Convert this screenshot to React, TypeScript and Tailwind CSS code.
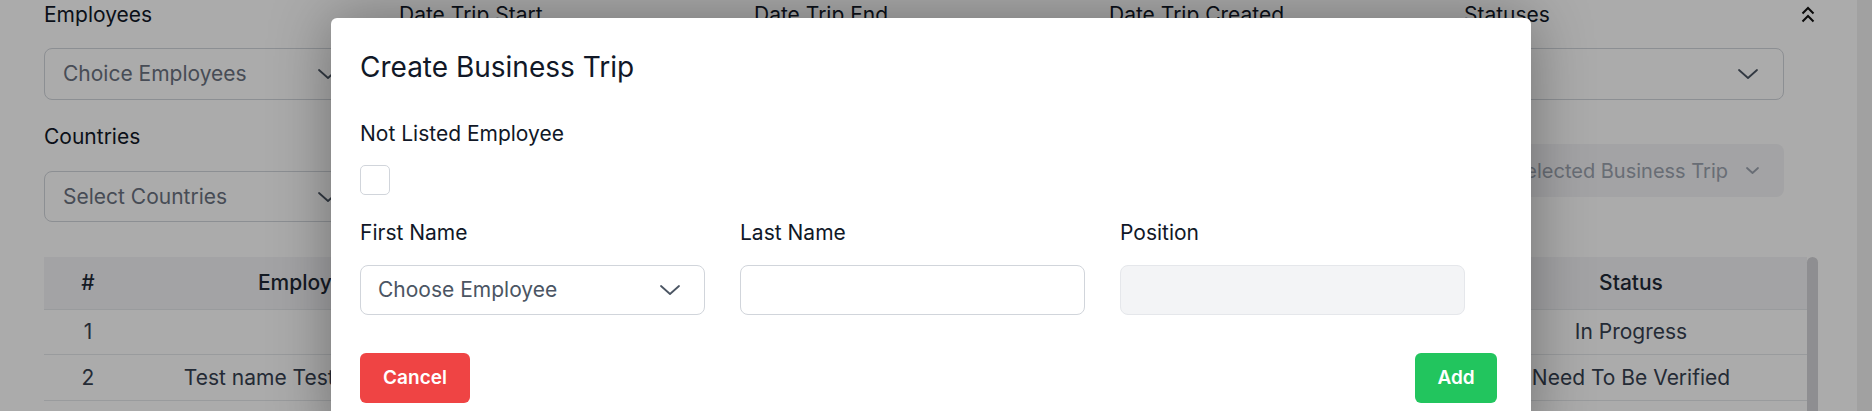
import React from "react";

function Chevron({ className = "", w = 20, h = 10 }: { className?: string; w?: number; h?: number }) {
  return (
    <svg width={w} height={h} viewBox={`0 0 ${w} ${h}`} fill="none" className={className}>
      <path d={`M1 1 L${w / 2} ${h - 1} L${w - 1} 1`} stroke="currentColor" strokeWidth="1.8" strokeLinecap="round" strokeLinejoin="round" />
    </svg>
  );
}

function ChevronsUp() {
  return (
    <svg width="14" height="17" viewBox="0 0 14 17" fill="none">
      <path d="M1.5 7.5 L7 2 L12.5 7.5" stroke="#111" strokeWidth="2" />
      <path d="M1.5 15.5 L7 10 L12.5 15.5" stroke="#111" strokeWidth="2" />
    </svg>
  );
}

function FilterField({ label, placeholder }: { label: string; placeholder?: string }) {
  return (
    <div className="flex flex-col">
      <label className="text-[21px] leading-[28px] text-[#111827]">{label}</label>
      <div className="mt-[19px] flex h-[52px] items-center justify-between rounded-lg border border-[#d1d5db] pl-[18px] pr-[25px] text-[21px] text-[#6b7280]">
        <span>{placeholder}</span>
        <Chevron className="text-[#4b5563]" />
      </div>
    </div>
  );
}

const rows = [
  { n: 1, employee: "", status: "In Progress" },
  { n: 2, employee: "Test name Test lastname", status: "Need To Be Verified" },
];

export default function App() {
  return (
    <div className="relative flex h-[411px] w-full overflow-hidden bg-white font-['Inter','Liberation_Sans',sans-serif]">
      <main className="flex-1 pl-[44px] pt-[1px]">
        <div className="flex items-start">
          <div className="w-[1740px]">
            <div className="grid grid-cols-5 gap-x-[35px]">
              <FilterField label="Employees" placeholder="Choice Employees" />
              <FilterField label="Date Trip Start" />
              <FilterField label="Date Trip End" />
              <FilterField label="Date Trip Created" />
              <FilterField label="Statuses" />
            </div>
            <div className="mt-[23px] flex items-start justify-between">
              <div className="w-[320px]">
                <label className="text-[21px] leading-[28px] text-[#111827]">Countries</label>
                <div className="mt-[20px] flex h-[51px] items-center justify-between rounded-lg border border-[#d1d5db] pl-[18px] pr-[25px] text-[21px] text-[#6b7280]">
                  <span>Select Countries</span>
                  <Chevron className="text-[#4b5563]" />
                </div>
              </div>
              <button className="mt-[21px] flex h-[53px] items-center gap-[18px] rounded-lg bg-[#f3f4f6] pl-[20px] pr-[25px] text-[20px] text-[#9ca3af]">
                <span>Selected Business Trip</span>
                <Chevron w={13} h={7} className="text-[#9ca3af]" />
              </button>
            </div>
          </div>
          <button className="ml-[17px] mt-[5px]">
            <ChevronsUp />
          </button>
        </div>

        <div className="mt-[35px] flex w-[1774px] items-start">
          <table className="w-[1763px] table-fixed border-collapse text-[21px] text-[#374151]">
            <colgroup>
              <col className="w-[88px]" />
              <col className="w-[350px]" />
              <col className="w-[240px]" />
              <col className="w-[240px]" />
              <col className="w-[240px]" />
              <col className="w-[253px]" />
              <col className="w-[352px]" />
            </colgroup>
            <thead>
              <tr className="h-[52px] border-b border-[#e5e7eb] bg-[#f3f4f6] text-[#1f2937]">
                <th className="font-medium">#</th>
                <th className="font-medium">Employee</th>
                <th className="font-medium">Country</th>
                <th className="font-medium">Start</th>
                <th className="font-medium">End</th>
                <th className="font-medium">Created</th>
                <th className="font-medium">Status</th>
              </tr>
            </thead>
            <tbody>
              {rows.map((r) => (
                <tr key={r.n} className="h-[45.5px] border-b border-[#e5e7eb] text-center">
                  <td>{r.n}</td>
                  <td className="whitespace-nowrap">{r.employee}</td>
                  <td></td>
                  <td></td>
                  <td></td>
                  <td></td>
                  <td className="whitespace-nowrap">{r.status}</td>
                </tr>
              ))}
            </tbody>
          </table>
          <div className="h-[300px] w-[11px] rounded-full bg-[#d4d4d8]" />
        </div>
      </main>
      <div className="w-[15px] bg-[#f1f1f1]" />

      <div className="absolute inset-0 bg-[rgba(0,0,0,0.33)]" />

      <div className="absolute left-[331px] top-[18px] w-[1200px] rounded-md bg-white pb-[40px] pl-[29px] pr-[34px] pt-[32px] shadow-[0_0_60px_rgba(0,0,0,0.35)]">
        <h2 className="text-[28px] leading-[34px] text-[#111827]">Create Business Trip</h2>
        <p className="mt-[36px] text-[21px] leading-[28px] text-[#111827]">Not Listed Employee</p>
        <div className="mt-[17px] h-[30px] w-[30px] rounded-[5px] border border-[#d1d5db] bg-white" />
        <div className="mt-[24px] grid grid-cols-[345px_345px_345px] gap-x-[35px]">
          <div>
            <label className="block text-[21px] leading-[28px] text-[#111827]">First Name</label>
            <div className="mt-[18px] flex h-[50px] items-center justify-between rounded-lg border border-[#d1d5db] pl-[17px] pr-[24px] text-[21px] text-[#4b5563]">
              <span>Choose Employee</span>
              <Chevron className="text-[#4b5563]" />
            </div>
          </div>
          <div>
            <label className="block text-[21px] leading-[28px] text-[#111827]">Last Name</label>
            <input className="mt-[18px] h-[50px] w-full rounded-lg border border-[#d1d5db] px-[17px] text-[21px] outline-none" />
          </div>
          <div>
            <label className="block text-[21px] leading-[28px] text-[#111827]">Position</label>
            <input disabled className="mt-[18px] h-[50px] w-full rounded-lg border border-[#e5e7eb] bg-[#f3f4f6] px-[17px] text-[21px] outline-none" />
          </div>
        </div>
        <div className="mt-[38px] flex items-center justify-between">
          <button className="h-[50px] w-[110px] rounded-md bg-[#ef4444] text-[19px] font-semibold text-white">Cancel</button>
          <button className="h-[50px] w-[82px] rounded-md bg-[#22c55e] text-[19px] font-semibold text-white">Add</button>
        </div>
      </div>
    </div>
  );
}
